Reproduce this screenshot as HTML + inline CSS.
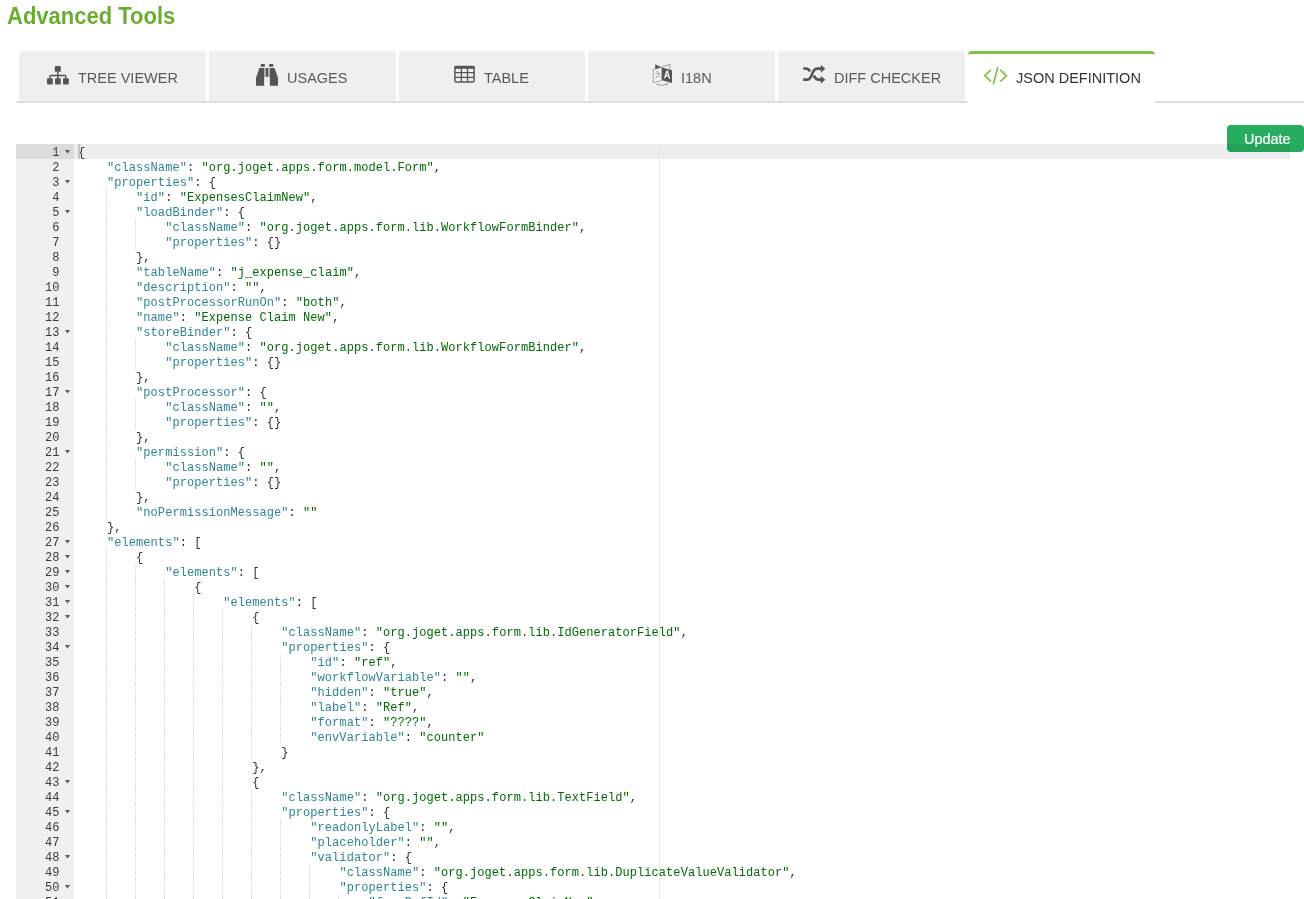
<!DOCTYPE html>
<html><head><meta charset="utf-8">
<style>
html,body{margin:0;padding:0;background:#fff;}
body{-webkit-font-smoothing:antialiased;width:1304px;height:899px;overflow:hidden;position:relative;font-family:"Liberation Sans",sans-serif;}
.title{will-change:transform;transform:scaleY(1.05);transform-origin:0 0;position:absolute;left:7px;top:0.5px;font-weight:bold;font-size:22px;line-height:30px;color:#6aae30;margin:0;white-space:nowrap;}
.tabline{position:absolute;left:16px;top:101px;width:1288px;height:2px;background:#dedede;}
.tab{position:absolute;top:51px;height:50px;width:186.8px;background:#efefef;border-radius:2.5px 2.5px 0 0;}
.tab.active{background:#fff;height:49px;border-top:3px solid #80c34a;border-radius:4px 4px 0 0;}
.tt{will-change:transform;position:absolute;top:70px;font-size:14.5px;line-height:16px;color:#5a5a5a;white-space:nowrap;}
.tt.act{color:#333;}
svg.ic{position:absolute;overflow:visible;}
.btn{position:absolute;left:1227px;top:125px;width:77px;height:27px;background:#27ad60;border-radius:4px;}
.btn span{will-change:transform;position:absolute;left:17px;top:6px;color:#fff;font-size:14.4px;line-height:16px;-webkit-text-stroke:0.2px #fff;white-space:nowrap;}
.ed{will-change:transform;position:absolute;left:16px;top:144px;width:1274px;height:760px;overflow:hidden;}
.gut{position:absolute;left:0;top:0;width:58px;height:100%;background:#f0f0f0;}
.gc{position:absolute;left:0;width:43.5px;height:15px;text-align:right;font:12px/15px "Liberation Mono",monospace;color:#3a3a3a;letter-spacing:0.059px;padding-top:2px;}
.gc .fw{position:absolute;left:48.5px;top:5.5px;width:6px;height:4px;background:#5c5c5c;clip-path:polygon(0 0,100% 0,50% 100%);}
.gact{position:absolute;left:0;top:0;width:58px;height:15px;background:#dcdcdc;}
.scr{position:absolute;left:58px;top:0;right:0;bottom:0;}
.al{position:absolute;left:0;right:0;top:0;height:15px;background:rgba(0,0,0,0.07);}
.pm{position:absolute;left:585px;top:0;width:1px;bottom:0;background:#e8e8e8;}
.cur{position:absolute;left:4px;top:0;width:2px;height:15px;background:#c4c4c4;}
.txt{position:absolute;left:4px;top:0;}
.ln{position:absolute;left:0px;height:15px;white-space:pre;font:12px/15px "Liberation Mono",monospace;letter-spacing:0.059px;color:#303030;padding-top:2px;}
.k{color:#318495;}
.s{color:#036a07;}
.ig{position:absolute;width:1px;background-image:repeating-linear-gradient(to bottom,#d3d3d3 0,#d3d3d3 1px,transparent 1px,transparent 2px);background-size:1px 15px;background-repeat:repeat-y;}
</style></head><body>
<div class="title">Advanced Tools</div>
<div class="tabline"></div>
<div class="tab" style="left:19px"></div>
<div class="tab" style="left:208.8px"></div>
<div class="tab" style="left:398.6px"></div>
<div class="tab" style="left:588.4px"></div>
<div class="tab" style="left:778.2px"></div>
<div class="tab active" style="left:968px"></div>

<!-- icons -->
<svg class="ic" style="left:0;top:0" width="1304" height="110" viewBox="0 0 1304 110">
 <g fill="#555">
  <rect x="54.8" y="66" width="6" height="5.8" rx="0.9"/>
  <rect x="57.1" y="71.5" width="1.5" height="7"/>
  <path d="M49.2 78.4 V76.2 Q49.2 74.7 50.7 74.7 H65 Q66.5 74.7 66.5 76.2 V78.4 H65.1 V76.2 H50.6 V78.4 Z"/>
  <rect x="47" y="78.2" width="5.8" height="6.3" rx="1"/>
  <rect x="55" y="78.2" width="5.8" height="6.3" rx="1"/>
  <rect x="63" y="78.2" width="5.8" height="6.3" rx="1"/>
 </g>
 <g fill="#555">
  <rect x="260.8" y="64" width="4" height="2.8"/>
  <rect x="269.2" y="64" width="4" height="2.8"/>
  <path d="M259.4 68 H264.1 V85.7 H256 V78 Z"/>
  <path d="M274.6 68 H269.9 V85.7 H278 V78 Z"/>
  <rect x="266" y="68" width="2" height="8.8"/>
  <rect x="264.1" y="68" width="1.9" height="9" fill="#aaa"/>
  <rect x="268" y="68" width="1.9" height="9" fill="#aaa"/>
 </g>
 <g fill="none" stroke="#555">
  <rect x="454.9" y="66.5" width="19.2" height="15.6" rx="1.6" stroke-width="1.5"/>
  <rect x="454.5" y="66" width="20" height="2.8" fill="#555" stroke="none"/>
  <path d="M461.35 68.5 V82 M467.5 68.5 V82 M455 72.65 H474 M455 77.45 H474" stroke-width="1.3"/>
 </g>
 <g fill="#555" stroke="#555">
  <path d="M653.3 69.6 L661.6 67.2 V80.4 L653.3 82.6 Z" fill="#f6f6f6" stroke="#7a7a7a" stroke-width="0.65"/>
  <path d="M655.2 64.3 L661.4 67.3 L655.2 69.1 Z" stroke="none"/>
  <path d="M661.9 67.3 L669.8 64.2 V69.4" fill="none" stroke="#6a6a6a" stroke-width="0.6"/>
  <path d="M662 67.6 L672 70.2 V83 L662 80.2 Z" stroke="none"/>
  <path d="M663.9 78.4 L666.3 70.7 H668.1 L670.2 79.1 L668.8 78.7 L668.3 76.6 H665.9 L665.3 78.2 Z M666.3 75.3 H668 L667.3 72.6 Z" fill="#fff" stroke="none"/>
  <path d="M656.4 71.4 H657.9 M655.3 73.5 L659.8 73.1 Q657.6 76.2 655.6 78.6 M658.6 76.4 L660.5 77.1" fill="none" stroke="#666" stroke-width="0.65"/>
  <path d="M657.2 84.3 Q662.3 86.6 667.3 84.1" fill="none" stroke="#777" stroke-width="0.7"/>
  <rect x="666.8" y="83.3" width="1.1" height="1.1" stroke="none"/>
  <rect x="656.6" y="83.8" width="0.8" height="0.8" stroke="none"/>
 </g>
 <g fill="none" stroke="#555" stroke-width="2.6">
  <path d="M803.2 68.5 H806 Q808.5 68.5 810 71.5"/>
  <path d="M803.2 79.6 H807 Q809.8 79.6 811.6 75.2 L812.7 72.5 Q814.2 68.6 817.5 68.6 H821.5"/>
  <path d="M813.8 75.6 Q815.4 79.6 818 79.6 H821.5"/>
 </g>
 <g fill="#555">
  <path d="M820.8 64.7 L825.3 68.7 L820.8 72.7 Z"/>
  <path d="M820.8 75.8 L825.3 79.8 L820.8 83.8 Z"/>
 </g>
 <g fill="none" stroke="#80c34a" stroke-width="1.8" stroke-linecap="round" stroke-linejoin="round">
  <path d="M990.4 70.3 L984.8 75.7 L990.4 81.1"/>
  <path d="M997.7 67.7 L993.4 83.7"/>
  <path d="M1000.8 70.3 L1006.4 75.7 L1000.8 81.1"/>
 </g>
</svg>

<div class="tt" style="left:78px">TREE VIEWER</div>
<div class="tt" style="left:286.5px">USAGES</div>
<div class="tt" style="left:483.5px">TABLE</div>
<div class="tt" style="left:680.5px">I18N</div>
<div class="tt" style="left:833.5px">DIFF CHECKER</div>
<div class="tt act" style="left:1015.5px">JSON DEFINITION</div>

<div class="btn"><span>Update</span></div>

<div class="ed">
 <div class="gut">
  <div class="gact"></div>
<div class="gc act" style="top:0px">1<i class="fw"></i></div>
<div class="gc" style="top:15px">2</div>
<div class="gc" style="top:30px">3<i class="fw"></i></div>
<div class="gc" style="top:45px">4</div>
<div class="gc" style="top:60px">5<i class="fw"></i></div>
<div class="gc" style="top:75px">6</div>
<div class="gc" style="top:90px">7</div>
<div class="gc" style="top:105px">8</div>
<div class="gc" style="top:120px">9</div>
<div class="gc" style="top:135px">10</div>
<div class="gc" style="top:150px">11</div>
<div class="gc" style="top:165px">12</div>
<div class="gc" style="top:180px">13<i class="fw"></i></div>
<div class="gc" style="top:195px">14</div>
<div class="gc" style="top:210px">15</div>
<div class="gc" style="top:225px">16</div>
<div class="gc" style="top:240px">17<i class="fw"></i></div>
<div class="gc" style="top:255px">18</div>
<div class="gc" style="top:270px">19</div>
<div class="gc" style="top:285px">20</div>
<div class="gc" style="top:300px">21<i class="fw"></i></div>
<div class="gc" style="top:315px">22</div>
<div class="gc" style="top:330px">23</div>
<div class="gc" style="top:345px">24</div>
<div class="gc" style="top:360px">25</div>
<div class="gc" style="top:375px">26</div>
<div class="gc" style="top:390px">27<i class="fw"></i></div>
<div class="gc" style="top:405px">28<i class="fw"></i></div>
<div class="gc" style="top:420px">29<i class="fw"></i></div>
<div class="gc" style="top:435px">30<i class="fw"></i></div>
<div class="gc" style="top:450px">31<i class="fw"></i></div>
<div class="gc" style="top:465px">32<i class="fw"></i></div>
<div class="gc" style="top:480px">33</div>
<div class="gc" style="top:495px">34<i class="fw"></i></div>
<div class="gc" style="top:510px">35</div>
<div class="gc" style="top:525px">36</div>
<div class="gc" style="top:540px">37</div>
<div class="gc" style="top:555px">38</div>
<div class="gc" style="top:570px">39</div>
<div class="gc" style="top:585px">40</div>
<div class="gc" style="top:600px">41</div>
<div class="gc" style="top:615px">42</div>
<div class="gc" style="top:630px">43<i class="fw"></i></div>
<div class="gc" style="top:645px">44</div>
<div class="gc" style="top:660px">45<i class="fw"></i></div>
<div class="gc" style="top:675px">46</div>
<div class="gc" style="top:690px">47</div>
<div class="gc" style="top:705px">48<i class="fw"></i></div>
<div class="gc" style="top:720px">49</div>
<div class="gc" style="top:735px">50<i class="fw"></i></div>
<div class="gc" style="top:750px">51</div>
 </div>
 <div class="scr">
  <div class="al"></div>
  <div class="pm"></div>
  <div class="txt">
<div class="ig" style="left:28.04px;top:45px;height:330px"></div><div class="ig" style="left:28.04px;top:405px;height:360px"></div><div class="ig" style="left:57.08px;top:75px;height:30px"></div><div class="ig" style="left:57.08px;top:195px;height:30px"></div><div class="ig" style="left:57.08px;top:255px;height:30px"></div><div class="ig" style="left:57.08px;top:315px;height:30px"></div><div class="ig" style="left:57.08px;top:420px;height:345px"></div><div class="ig" style="left:86.12px;top:435px;height:330px"></div><div class="ig" style="left:115.16px;top:450px;height:315px"></div><div class="ig" style="left:144.20px;top:465px;height:300px"></div><div class="ig" style="left:173.24px;top:480px;height:135px"></div><div class="ig" style="left:173.24px;top:645px;height:120px"></div><div class="ig" style="left:202.28px;top:510px;height:90px"></div><div class="ig" style="left:202.28px;top:675px;height:90px"></div><div class="ig" style="left:231.32px;top:720px;height:45px"></div><div class="ig" style="left:260.36px;top:750px;height:15px"></div>
<div class="ln" style="top:0px">{</div>
<div class="ln" style="top:15px">    <span class="k">&quot;className&quot;</span>: <span class="s">&quot;org.joget.apps.form.model.Form&quot;</span>,</div>
<div class="ln" style="top:30px">    <span class="k">&quot;properties&quot;</span>: {</div>
<div class="ln" style="top:45px">        <span class="k">&quot;id&quot;</span>: <span class="s">&quot;ExpensesClaimNew&quot;</span>,</div>
<div class="ln" style="top:60px">        <span class="k">&quot;loadBinder&quot;</span>: {</div>
<div class="ln" style="top:75px">            <span class="k">&quot;className&quot;</span>: <span class="s">&quot;org.joget.apps.form.lib.WorkflowFormBinder&quot;</span>,</div>
<div class="ln" style="top:90px">            <span class="k">&quot;properties&quot;</span>: {}</div>
<div class="ln" style="top:105px">        },</div>
<div class="ln" style="top:120px">        <span class="k">&quot;tableName&quot;</span>: <span class="s">&quot;j_expense_claim&quot;</span>,</div>
<div class="ln" style="top:135px">        <span class="k">&quot;description&quot;</span>: <span class="s">&quot;&quot;</span>,</div>
<div class="ln" style="top:150px">        <span class="k">&quot;postProcessorRunOn&quot;</span>: <span class="s">&quot;both&quot;</span>,</div>
<div class="ln" style="top:165px">        <span class="k">&quot;name&quot;</span>: <span class="s">&quot;Expense Claim New&quot;</span>,</div>
<div class="ln" style="top:180px">        <span class="k">&quot;storeBinder&quot;</span>: {</div>
<div class="ln" style="top:195px">            <span class="k">&quot;className&quot;</span>: <span class="s">&quot;org.joget.apps.form.lib.WorkflowFormBinder&quot;</span>,</div>
<div class="ln" style="top:210px">            <span class="k">&quot;properties&quot;</span>: {}</div>
<div class="ln" style="top:225px">        },</div>
<div class="ln" style="top:240px">        <span class="k">&quot;postProcessor&quot;</span>: {</div>
<div class="ln" style="top:255px">            <span class="k">&quot;className&quot;</span>: <span class="s">&quot;&quot;</span>,</div>
<div class="ln" style="top:270px">            <span class="k">&quot;properties&quot;</span>: {}</div>
<div class="ln" style="top:285px">        },</div>
<div class="ln" style="top:300px">        <span class="k">&quot;permission&quot;</span>: {</div>
<div class="ln" style="top:315px">            <span class="k">&quot;className&quot;</span>: <span class="s">&quot;&quot;</span>,</div>
<div class="ln" style="top:330px">            <span class="k">&quot;properties&quot;</span>: {}</div>
<div class="ln" style="top:345px">        },</div>
<div class="ln" style="top:360px">        <span class="k">&quot;noPermissionMessage&quot;</span>: <span class="s">&quot;&quot;</span></div>
<div class="ln" style="top:375px">    },</div>
<div class="ln" style="top:390px">    <span class="k">&quot;elements&quot;</span>: [</div>
<div class="ln" style="top:405px">        {</div>
<div class="ln" style="top:420px">            <span class="k">&quot;elements&quot;</span>: [</div>
<div class="ln" style="top:435px">                {</div>
<div class="ln" style="top:450px">                    <span class="k">&quot;elements&quot;</span>: [</div>
<div class="ln" style="top:465px">                        {</div>
<div class="ln" style="top:480px">                            <span class="k">&quot;className&quot;</span>: <span class="s">&quot;org.joget.apps.form.lib.IdGeneratorField&quot;</span>,</div>
<div class="ln" style="top:495px">                            <span class="k">&quot;properties&quot;</span>: {</div>
<div class="ln" style="top:510px">                                <span class="k">&quot;id&quot;</span>: <span class="s">&quot;ref&quot;</span>,</div>
<div class="ln" style="top:525px">                                <span class="k">&quot;workflowVariable&quot;</span>: <span class="s">&quot;&quot;</span>,</div>
<div class="ln" style="top:540px">                                <span class="k">&quot;hidden&quot;</span>: <span class="s">&quot;true&quot;</span>,</div>
<div class="ln" style="top:555px">                                <span class="k">&quot;label&quot;</span>: <span class="s">&quot;Ref&quot;</span>,</div>
<div class="ln" style="top:570px">                                <span class="k">&quot;format&quot;</span>: <span class="s">&quot;????&quot;</span>,</div>
<div class="ln" style="top:585px">                                <span class="k">&quot;envVariable&quot;</span>: <span class="s">&quot;counter&quot;</span></div>
<div class="ln" style="top:600px">                            }</div>
<div class="ln" style="top:615px">                        },</div>
<div class="ln" style="top:630px">                        {</div>
<div class="ln" style="top:645px">                            <span class="k">&quot;className&quot;</span>: <span class="s">&quot;org.joget.apps.form.lib.TextField&quot;</span>,</div>
<div class="ln" style="top:660px">                            <span class="k">&quot;properties&quot;</span>: {</div>
<div class="ln" style="top:675px">                                <span class="k">&quot;readonlyLabel&quot;</span>: <span class="s">&quot;&quot;</span>,</div>
<div class="ln" style="top:690px">                                <span class="k">&quot;placeholder&quot;</span>: <span class="s">&quot;&quot;</span>,</div>
<div class="ln" style="top:705px">                                <span class="k">&quot;validator&quot;</span>: {</div>
<div class="ln" style="top:720px">                                    <span class="k">&quot;className&quot;</span>: <span class="s">&quot;org.joget.apps.form.lib.DuplicateValueValidator&quot;</span>,</div>
<div class="ln" style="top:735px">                                    <span class="k">&quot;properties&quot;</span>: {</div>
<div class="ln" style="top:750px">                                        <span class="k">&quot;formDefId&quot;</span>: <span class="s">&quot;ExpensesClaimNew&quot;</span>,</div>
  </div>
  <div class="cur"></div>
 </div>
</div>
</body></html>
